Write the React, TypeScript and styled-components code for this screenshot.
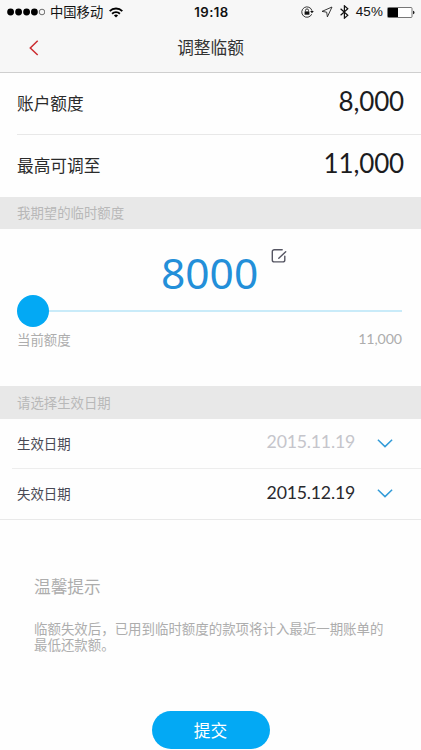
import React from 'react';
import styled, { createGlobalStyle } from 'styled-components';

const Global = createGlobalStyle`
  * { box-sizing: border-box; }
  body { margin: 0; background: #fefefe; font-family: "Noto Sans CJK SC", sans-serif; }
  h1, h2, p { margin: 0; font-weight: inherit; }
  button { font: inherit; border: 0; background: none; padding: 0; }
`;

const Screen = styled.div`
  width: 421px;
  height: 750px;
  overflow: hidden;
  display: flex;
  flex-direction: column;
  background: #fefefe;
`;

const Header = styled.header`
  height: 73px;
  flex: none;
  background: #f7f7f7;
  border-bottom: 1px solid #cfcfcf;
`;

const StatusBar = styled.div`
  height: 24px;
  padding: 0 6px 0 7px;
  display: grid;
  grid-template-columns: 1fr auto 1fr;
  align-items: center;
  color: #111;
`;

const StatusGroup = styled.div<{ $end?: boolean }>`
  display: flex;
  align-items: center;
  justify-content: ${(p) => (p.$end ? 'flex-end' : 'flex-start')};
  svg { display: block; flex: none; }
`;

const Carrier = styled.span`
  margin: 0 6px 0 5px;
  font-size: 13.3px;
  line-height: 20px;
`;

const Clock = styled.span`
  padding-left: 1px;
  font: 600 13.2px/20px Inter, sans-serif;
  letter-spacing: 0.45px;
`;

const Percent = styled.span`
  margin: 0 4px 0 7px;
  font: 400 13.4px/20px "Liberation Sans", sans-serif;
  letter-spacing: 0.15px;
`;

const StatusIconGap = styled.span`
  width: 7px;
  flex: none;
`;

const NavBar = styled.nav`
  height: 48px;
  padding: 0 28px;
  display: grid;
  grid-template-columns: 40px 1fr 40px;
  align-items: center;
`;

const BackButton = styled.button`
  display: flex;
`;

const Title = styled.h1`
  padding-bottom: 2px;
  text-align: center;
  font-size: 16.7px;
  line-height: 24px;
  color: #333;
`;

const Row = styled.div<{ $height: number; $inset: number; $line: string }>`
  height: ${(p) => p.$height}px;
  flex: none;
  margin-left: ${(p) => p.$inset}px;
  padding-left: ${(p) => 17 - p.$inset}px;
  padding-right: 17px;
  display: flex;
  align-items: center;
  border-bottom: 1px solid ${(p) => p.$line};
`;

const DateRow = styled(Row)`
  padding-right: 28px;
`;

const Label = styled.span<{ $small?: boolean }>`
  padding-bottom: 2px;
  font-size: ${(p) => (p.$small ? 13.4 : 16.7)}px;
  line-height: 24px;
  color: ${(p) => (p.$small ? '#484854' : '#2b2b2b')};
`;

const Amount = styled.span`
  margin-left: auto;
  padding-bottom: 5px;
  font: 400 26px/32px Lato, sans-serif;
  letter-spacing: -0.15px;
  color: #1c1c1e;
`;

const SectionTitle = styled.div<{ $height: number }>`
  height: ${(p) => p.$height}px;
  flex: none;
  padding: 0 0 2px 17px;
  display: flex;
  align-items: center;
  background: #e8e8e8;
  color: #b8b8b8;
  font-size: 13.4px;
`;

const LimitPanel = styled.section`
  height: 157px;
  flex: none;
  padding: 18px 19px 0 17px;
`;

const LimitValue = styled.div`
  height: 48px;
  padding-left: 144px;
  display: flex;
  gap: 13px;
  font: 400 42.5px/51px "Noto Sans", sans-serif;
  color: #238fd9;
  svg { display: block; margin-top: 1px; }
`;

const Slider = styled.div`
  height: 32px;
  display: flex;
  align-items: center;
`;

const Thumb = styled.div`
  width: 32px;
  height: 32px;
  border-radius: 50%;
  background: #03a9f4;
`;

const Track = styled.div`
  flex: 1;
  height: 2px;
  background: #c9ebf9;
`;

const Scale = styled.div`
  margin-top: 2px;
  display: flex;
  justify-content: space-between;
  font-size: 13.4px;
  line-height: 20px;
  color: #adadad;
`;

const ScaleMax = styled.span`
  font: 400 14.2px/19px Lato, sans-serif;
  letter-spacing: -0.1px;
`;

const DateValue = styled.span<{ $muted?: boolean }>`
  margin-left: auto;
  margin-right: 22px;
  font: 400 17.7px/24px Lato, sans-serif;
  letter-spacing: -0.2px;
  padding-bottom: 3px;
  color: ${(p) => (p.$muted ? '#c5c5cb' : '#29292d')};
`;

const Tips = styled.section`
  flex: none;
  height: 191px;
  padding: 54px 34px 0;
  color: #adadad;
`;

const TipsTitle = styled.h2`
  font-size: 16.7px;
  line-height: 24px;
`;

const TipsText = styled.p`
  margin-top: 22px;
  font-size: 13.45px;
  line-height: 16px;
  white-space: nowrap;
`;

const Submit = styled.button`
  align-self: center;
  flex: none;
  width: 118px;
  height: 38px;
  border-radius: 19px;
  background: #03a9f4;
  color: #fff;
  font-size: 16.7px;
  line-height: 37px;
`;

const Signal = () => (
  <svg width="38" height="8" viewBox="0 0 38 8">
    {[3.6, 11.6, 19.6, 27.4].map((x) => (
      <circle key={x} cx={x} cy="4" r="3.4" fill="#000" />
    ))}
    <circle cx="35" cy="4" r="2.8" fill="none" stroke="#333" strokeWidth=".7" />
  </svg>
);

const Wifi = () => (
  <svg width="14" height="11" viewBox="0 0 14 11" fill="none" stroke="#000" strokeWidth="1.9">
    <path d="M.7 4.1a9 9 0 0 1 12.6 0M3.1 6.7a5.6 5.6 0 0 1 7.8 0" />
    <path d="M4.9 8.5a3 3 0 0 1 4.2 0L7 10.6z" fill="#000" stroke="none" />
  </svg>
);

const OrientationLock = () => (
  <svg width="13" height="12" viewBox="0 0 13 12" fill="none" stroke="#222" strokeWidth=".9">
    <path d="M10.7 8.2A5.2 5.2 0 1 1 11 4.8" />
    <path d="M9.1 4.9h3.7L11 7.2z" fill="#111" stroke="none" />
    <path d="M3.6 5.4h4.8v3.3H3.6z" fill="#111" stroke="none" />
    <path d="M4.5 5.5V4.4a1.5 1.5 0 0 1 3 0v1.1" />
  </svg>
);

const Location = () => (
  <svg width="12" height="12" viewBox="0 0 12 12" fill="none" stroke="#222" strokeWidth=".9">
    <path d="M11 1 1 5.4l4.7.8.7 4.7z" strokeLinejoin="round" />
  </svg>
);

const Bluetooth = () => (
  <svg width="9" height="14" viewBox="0 0 9 14" fill="none" stroke="#111" strokeWidth="1.2">
    <path d="m.6 3.7 7.2 6.5-3.4 3V.8l3.4 3L.6 10.3" />
  </svg>
);

const Battery = () => (
  <svg width="28" height="11" viewBox="0 0 28 11">
    <rect x=".5" y=".5" width="24.5" height="10" rx="1" fill="#fff" stroke="#555" strokeWidth=".8" />
    <path d="M1 1h10v9H1z" fill="#000" />
    <path d="M26 3.7q1.5.3 1.5 1.8T26 7.3z" fill="#222" />
  </svg>
);

const BackArrow = () => (
  <svg width="12" height="16" viewBox="0 0 12 16" fill="none" stroke="#cc2c30" strokeWidth="1.5">
    <path d="M9.7.8 2.3 8l7.4 7" />
  </svg>
);

const Edit = () => (
  <svg width="16" height="16" viewBox="0 0 16 16" fill="none" stroke="#555562" strokeWidth="1.4" strokeLinecap="round">
    <path d="M11.2 1.7H3.3a2 2 0 0 0-2 2v8.2a2 2 0 0 0 2 2h8.5a2 2 0 0 0 2-2V8.3" />
    <path d="m7.8 10.2 6.9-6.4" />
  </svg>
);

const Chevron = () => (
  <svg width="16" height="10" viewBox="0 0 16 10" fill="none" stroke="#329bd8" strokeWidth="1.5">
    <path d="m.9.7 7.1 6.9L15.1.7" />
  </svg>
);

export default function App() {
  return (
    <Screen>
      <Global />
      <Header>
        <StatusBar>
          <StatusGroup>
            <Signal />
            <Carrier>中国移动</Carrier>
            <Wifi />
          </StatusGroup>
          <Clock>19:18</Clock>
          <StatusGroup $end>
            <OrientationLock />
            <StatusIconGap />
            <Location />
            <StatusIconGap />
            <Bluetooth />
            <Percent>45%</Percent>
            <Battery />
          </StatusGroup>
        </StatusBar>
        <NavBar>
          <BackButton aria-label="返回"><BackArrow /></BackButton>
          <Title>调整临额</Title>
        </NavBar>
      </Header>

      <Row $height={62} $inset={17} $line="#e8e8e8">
        <Label>账户额度</Label>
        <Amount>8,000</Amount>
      </Row>
      <Row $height={62} $inset={17} $line="transparent">
        <Label>最高可调至</Label>
        <Amount>11,000</Amount>
      </Row>

      <SectionTitle $height={32}>我期望的临时额度</SectionTitle>
      <LimitPanel>
        <LimitValue>
          <span>8000</span>
          <Edit />
        </LimitValue>
        <Slider>
          <Thumb />
          <Track />
        </Slider>
        <Scale>
          <span>当前额度</span>
          <ScaleMax>11,000</ScaleMax>
        </Scale>
      </LimitPanel>

      <SectionTitle $height={33}>请选择生效日期</SectionTitle>
      <DateRow $height={50} $inset={12} $line="#ededed">
        <Label $small>生效日期</Label>
        <DateValue $muted>2015.11.19</DateValue>
        <Chevron />
      </DateRow>
      <DateRow $height={51} $inset={0} $line="#e9e9e9">
        <Label $small>失效日期</Label>
        <DateValue>2015.12.19</DateValue>
        <Chevron />
      </DateRow>

      <Tips>
        <TipsTitle>温馨提示</TipsTitle>
        <TipsText>
          临额失效后，已用到临时额度的款项将计入最近一期账单的
          <br />
          最低还款额。
        </TipsText>
      </Tips>
      <Submit>提交</Submit>
    </Screen>
  );
}
